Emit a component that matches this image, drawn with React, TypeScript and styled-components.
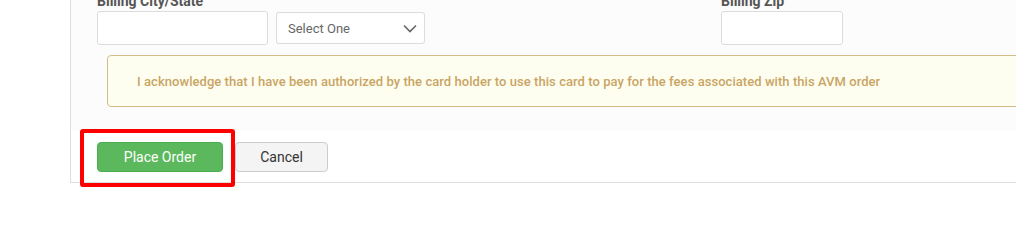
import React from "react";
import styled, { createGlobalStyle } from "styled-components";

const Global = createGlobalStyle`
  html, body { margin: 0; padding: 0; background: #ffffff; overflow: hidden; }
  body { font-family: Roboto, "Liberation Sans", Arial, sans-serif; }
  * { box-sizing: border-box; }
`;

const Page = styled.div`
  width: 1016px;
  height: 228px;
  overflow: hidden;
  position: relative;
`;

const Panel = styled.div`
  margin-left: 70px;
  margin-top: -22px;
  width: 970px;
  border-left: 1px solid #dddddd;
  border-bottom: 1px solid #dddddd;
`;

const FormArea = styled.div`
  background: #fcfcfc;
  padding: 0 0 0 26px;
  height: 152px;
  display: flex;
  flex-direction: column;
`;

const FieldRow = styled.div`
  display: flex;
  align-items: flex-start;
  height: 77px;
`;

const FieldGroup = styled.div<{ $width: number }>`
  width: ${(p) => p.$width}px;
  display: flex;
  flex-direction: column;
`;

const Label = styled.label`
  font-size: 14px;
  font-weight: 700;
  color: #555555;
  line-height: 18px;
  height: 33px;
  padding-top: 14px;
`;

const Controls = styled.div`
  display: flex;
  gap: 8px;
  align-items: center;
`;

const TextInput = styled.input<{ $width: number }>`
  width: ${(p) => p.$width}px;
  height: 34px;
  border: 1px solid #dcdcdc;
  border-radius: 3px;
  background: #ffffff;
  padding: 0 10px;
  font-family: inherit;
  outline: none;
`;

const SelectBox = styled.div`
  width: 149px;
  height: 32px;
  border: 1px solid #dcdcdc;
  border-radius: 3px;
  background: #ffffff;
  display: flex;
  align-items: center;
  justify-content: space-between;
  padding: 0 7px 0 11px;
  font-size: 13px;
  color: #666666;
`;

const Alert = styled.div`
  margin-left: 10px;
  height: 52px;
  border: 1px solid #d4bb8c;
  border-radius: 4px;
  background: #fefef0;
  display: flex;
  align-items: center;
  padding-left: 29px;
  font-size: 13px;
  font-weight: 500;
  letter-spacing: 0.05px;
  color: #c9a565;
`;

const ButtonBar = styled.div`
  display: flex;
  gap: 12px;
  padding: 12px 0 10px 26px;
`;

const Button = styled.button<{ $primary?: boolean; $width: number }>`
  width: ${(p) => p.$width}px;
  height: 30px;
  border-radius: 4px;
  font-family: inherit;
  font-size: 14px;
  cursor: pointer;
  border: 1px solid ${(p) => (p.$primary ? "#4cae4c" : "#cccccc")};
  background: ${(p) => (p.$primary ? "#5cb85c" : "#f4f4f4")};
  color: ${(p) => (p.$primary ? "#ffffff" : "#333333")};
`;

const Highlight = styled.div`
  position: absolute;
  left: 80px;
  top: 129px;
  width: 155px;
  height: 58px;
  border: 4px solid #ff0000;
  border-radius: 3px;
  pointer-events: none;
`;

const Chevron = () => (
  <svg width="14" height="9" viewBox="0 0 14 9" fill="none">
    <path d="M1 1.5 L7 7.5 L13 1.5" stroke="#666" strokeWidth="1.6" />
  </svg>
);

export default function App() {
  return (
    <Page>
      <Global />
      <Panel>
        <FormArea>
          <FieldRow>
            <FieldGroup $width={624}>
              <Label>Billing City/State</Label>
              <Controls>
                <TextInput $width={171} />
                <SelectBox>
                  <span>Select One</span>
                  <Chevron />
                </SelectBox>
              </Controls>
            </FieldGroup>
            <FieldGroup $width={200}>
              <Label>Billing Zip</Label>
              <Controls>
                <TextInput $width={122} />
              </Controls>
            </FieldGroup>
          </FieldRow>
          <Alert>
            I acknowledge that I have been authorized by the card holder to use this card to pay for the fees associated with this AVM order
          </Alert>
        </FormArea>
        <ButtonBar>
          <Button $primary $width={126}>Place Order</Button>
          <Button $width={93}>Cancel</Button>
        </ButtonBar>
      </Panel>
      <Highlight />
    </Page>
  );
}
